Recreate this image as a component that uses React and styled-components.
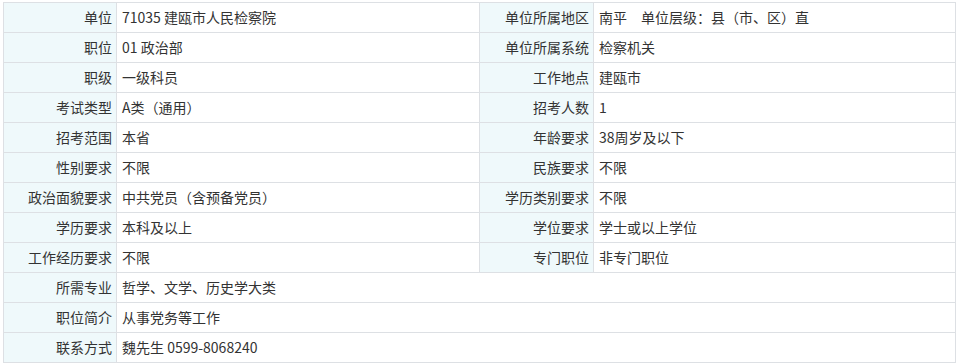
import styled, { createGlobalStyle } from "styled-components";

const GlobalStyle = createGlobalStyle`
  body {
    margin: 0;
    background: #ffffff;
    font-family: "Noto Sans CJK SC", "Microsoft YaHei", sans-serif;
  }
`;

const columns = [113, 363, 114, 362];

const rows = [
  [["单位", "71035 建瓯市人民检察院"], ["单位所属地区", "南平　单位层级：县（市、区）直"]],
  [["职位", "01 政治部"], ["单位所属系统", "检察机关"]],
  [["职级", "一级科员"], ["工作地点", "建瓯市"]],
  [["考试类型", "A类（通用）"], ["招考人数", "1"]],
  [["招考范围", "本省"], ["年龄要求", "38周岁及以下"]],
  [["性别要求", "不限"], ["民族要求", "不限"]],
  [["政治面貌要求", "中共党员（含预备党员）"], ["学历类别要求", "不限"]],
  [["学历要求", "本科及以上"], ["学位要求", "学士或以上学位"]],
  [["工作经历要求", "不限"], ["专门职位", "非专门职位"]],
  [["所需专业", "哲学、文学、历史学大类"]],
  [["职位简介", "从事党务等工作"]],
  [["联系方式", "魏先生 0599-8068240"]],
];

export default function App() {
  return (
    <>
      <GlobalStyle />
      <Page>
        <DetailTable>
          <colgroup>
            {columns.map((w, i) => (
              <Col key={i} $width={w} />
            ))}
          </colgroup>
          <tbody>
            {rows.map((row, i) => (
              <tr key={i}>
                {row.map(([label, value], j) => (
                  <Pair key={j} label={label} value={value} wide={row.length === 1} />
                ))}
              </tr>
            ))}
          </tbody>
        </DetailTable>
      </Page>
    </>
  );
}

function Pair({ label, value, wide }) {
  return (
    <>
      <LabelCell>{label}</LabelCell>
      <ValueCell colSpan={wide ? 3 : 1}>{value}</ValueCell>
    </>
  );
}

const Page = styled.div`
  padding: 2px 0 0 3px;
`;

const DetailTable = styled.table`
  width: 953px;
  table-layout: fixed;
  border-collapse: collapse;
  font-size: 14px;
  color: #333333;
  text-spacing-trim: space-all;
`;

const Col = styled.col`
  width: ${({ $width }) => $width}px;
`;

const Cell = styled.td`
  height: 29px;
  padding: 0;
  border: 1px solid #dde0e4;
  white-space: nowrap;
  overflow: hidden;
  line-height: 29px;
  vertical-align: middle;
`;

const LabelCell = styled(Cell)`
  background: #eff9fb;
  text-align: right;
  padding-right: 4px;
`;

const ValueCell = styled(Cell)`
  background: #ffffff;
  text-align: left;
  padding-left: 5px;
`;
